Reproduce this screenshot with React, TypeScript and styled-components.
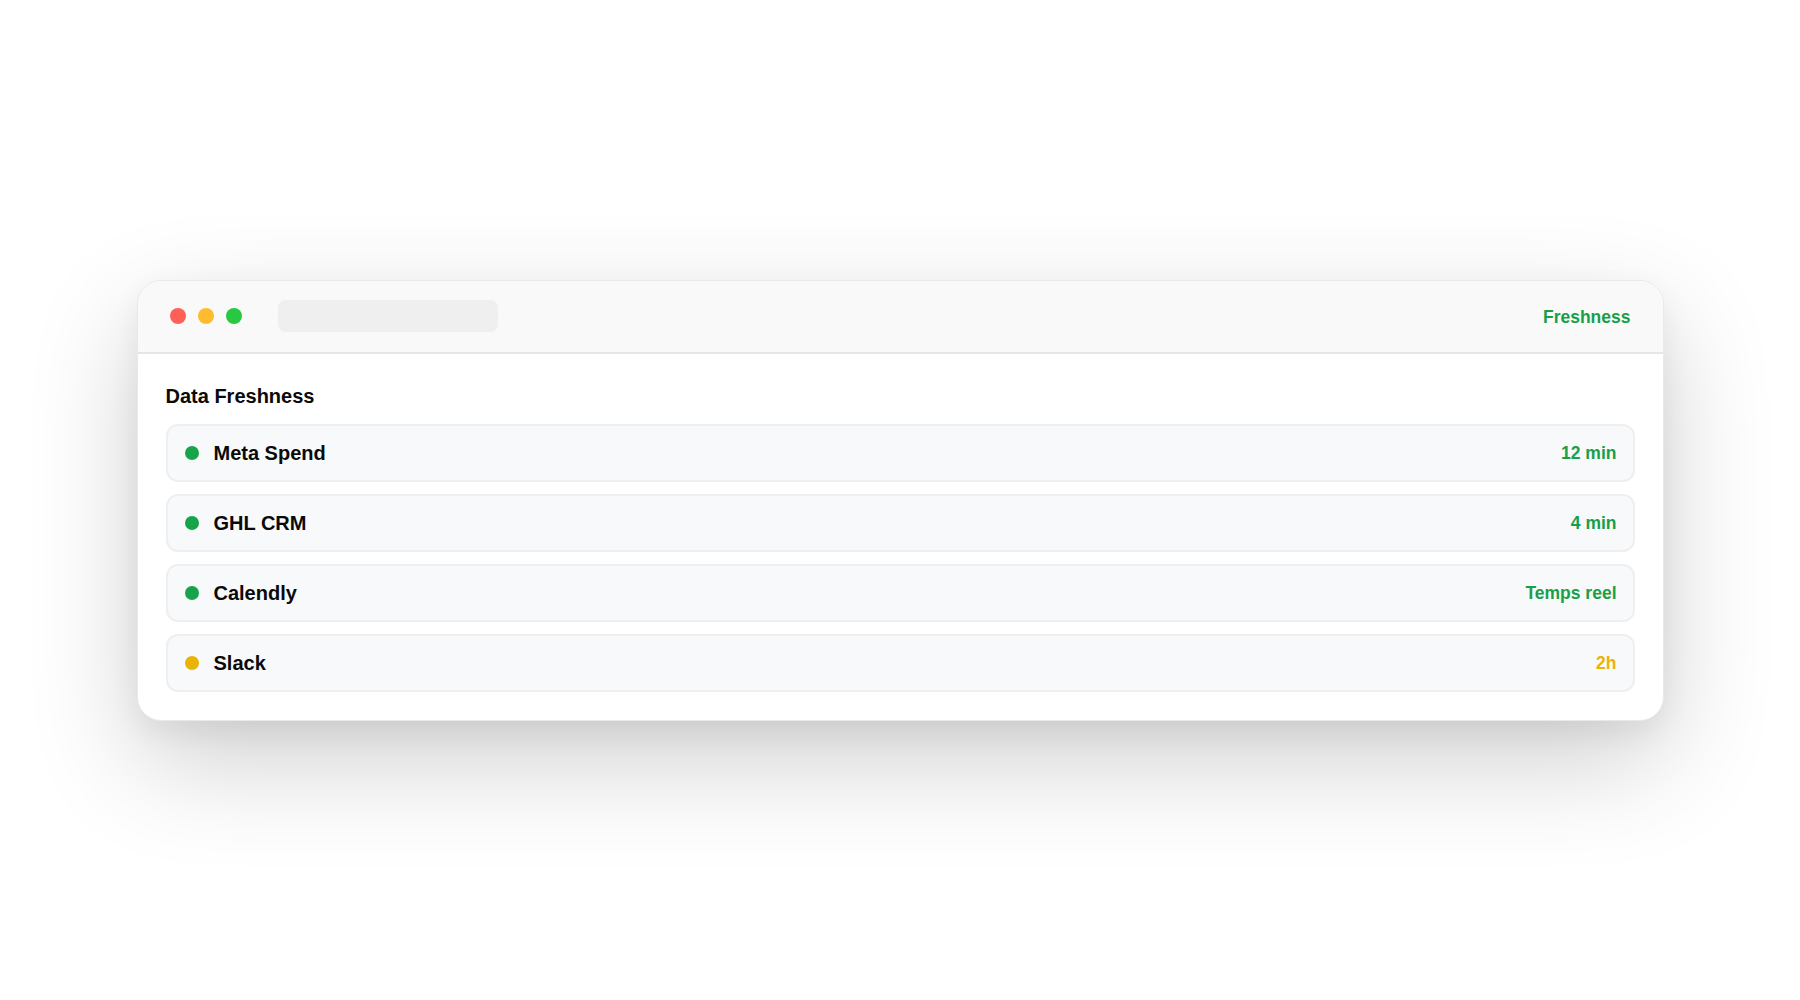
import React from "react";
import styled, { createGlobalStyle } from "styled-components";

const Global = createGlobalStyle`
  html, body { margin: 0; padding: 0; background: #ffffff; }
  body { font-family: "Liberation Sans", Arial, Helvetica, sans-serif; }
`;

const Page = styled.div`
  min-height: 100vh;
  display: flex;
  align-items: center;
  justify-content: center;
`;

const Window = styled.div`
  width: 1527px;
  box-sizing: border-box;
  background: #ffffff;
  border: 1px solid #e9e9eb;
  border-radius: 24px;
  overflow: hidden;
  box-shadow: 0 40px 110px rgba(0, 0, 0, 0.19), 0 12px 30px rgba(0, 0, 0, 0.06);
`;

const TitleBar = styled.div`
  height: 73px;
  box-sizing: border-box;
  display: flex;
  align-items: center;
  padding: 0 32px 0 32px;
  background: #f9f9fa;
  border-bottom: 2px solid #e6e6ea;
`;

const Lights = styled.div`
  display: flex;
  gap: 12px;
`;

const Light = styled.span<{ $color: string }>`
  width: 16px;
  height: 16px;
  border-radius: 50%;
  background: ${(p) => p.$color};
`;

const AddressBar = styled.div`
  width: 220px;
  height: 32px;
  margin-left: 36px;
  border-radius: 8px;
  background: #efefef;
`;

const TitleLabel = styled.div`
  margin-left: auto;
  padding-top: 2px;
  font-size: 17.5px;
  font-weight: 700;
  color: #1a9f48;
`;

const Body = styled.div`
  padding: 30px 28px 28px 28px;
`;

const Heading = styled.h2`
  margin: 0 0 16px 0;
  font-size: 20px;
  line-height: 24px;
  font-weight: 700;
  color: #0a0a0a;
`;

const List = styled.div`
  display: flex;
  flex-direction: column;
  gap: 12px;
`;

const Row = styled.div`
  height: 58px;
  box-sizing: border-box;
  display: flex;
  align-items: center;
  padding: 1px 16px 0 17px;
  background: #f8f9fa;
  border: 2px solid #eeeff1;
  border-radius: 12px;
`;

const Dot = styled.span<{ $color: string }>`
  width: 14px;
  height: 14px;
  border-radius: 50%;
  background: ${(p) => p.$color};
  flex-shrink: 0;
`;

const Name = styled.span`
  margin-left: 15px;
  font-size: 20px;
  font-weight: 700;
  color: #0a0a0a;
`;

const Value = styled.span<{ $color: string }>`
  margin-left: auto;
  font-size: 17.5px;
  font-weight: 700;
  color: ${(p) => p.$color};
`;

const GREEN = "#16a34a";
const TEXT_GREEN = "#1a9f48";
const YELLOW = "#eab308";

const sources = [
  { name: "Meta Spend", value: "12 min", ok: true },
  { name: "GHL CRM", value: "4 min", ok: true },
  { name: "Calendly", value: "Temps reel", ok: true },
  { name: "Slack", value: "2h", ok: false },
];

export default function App() {
  return (
    <>
      <Global />
      <Page>
        <Window>
          <TitleBar>
            <Lights>
              <Light $color="#ff5f57" />
              <Light $color="#febc2e" />
              <Light $color="#28c840" />
            </Lights>
            <AddressBar />
            <TitleLabel>Freshness</TitleLabel>
          </TitleBar>
          <Body>
            <Heading>Data Freshness</Heading>
            <List>
              {sources.map((s) => (
                <Row key={s.name}>
                  <Dot $color={s.ok ? GREEN : YELLOW} />
                  <Name>{s.name}</Name>
                  <Value $color={s.ok ? TEXT_GREEN : YELLOW}>{s.value}</Value>
                </Row>
              ))}
            </List>
          </Body>
        </Window>
      </Page>
    </>
  );
}
